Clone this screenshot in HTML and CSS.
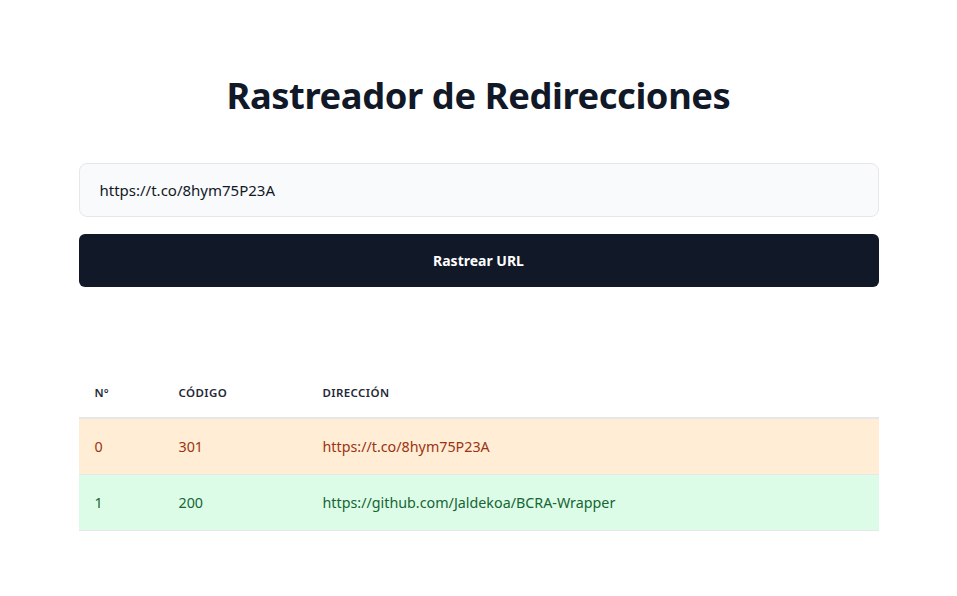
FILE: index.html
```html
<!DOCTYPE html>
<html>
<head>
	<title>Rastreador de Redirecciones</title>
	<link rel="stylesheet" href="styles.css">
</head>
<body>
	<main class="container">
		<h1 class="title">Rastreador de Redirecciones</h1>

		<form class="tracker">
			<input type="text" class="url-input" value="https://t.co/8hym75P23A">
			<button type="button" class="track-button">Rastrear URL</button>
		</form>

		<table class="hops">
			<thead>
				<tr>
					<th class="col-n">Nº</th>
					<th class="col-code">Código</th>
					<th>Dirección</th>
				</tr>
			</thead>
			<tbody>
				<tr class="hop redirect">
					<td>0</td>
					<td>301</td>
					<td>https://t.co/8hym75P23A</td>
				</tr>
				<tr class="hop ok">
					<td>1</td>
					<td>200</td>
					<td>https://github.com/Jaldekoa/BCRA-Wrapper</td>
				</tr>
			</tbody>
		</table>
	</main>
</body>
</html>
```

FILE: styles.css
```css
/* Page layout */

body {
	margin: 0;
	background: #ffffff;
	font-family: "Noto Sans", "Open Sans", sans-serif;
	color: #111827;
}

.container {
	max-width: 800px;
	margin: 0 auto;
	padding-top: 73px;
}

.title {
	margin: 0 0 46px;
	font-size: 36.3px;
	line-height: 44px;
	font-weight: 700;
	text-align: center;
	color: #111827;
	letter-spacing: -0.4px;
}

/* Form */

.tracker {
	display: flex;
	flex-direction: column;
	gap: 17px;
}

.url-input {
	box-sizing: border-box;
	height: 54px;
	padding: 0 20px;
	border: 1px solid #e5e7eb;
	border-radius: 8px;
	background: #f9fafb;
	font-family: inherit;
	font-size: 15px;
	color: #111827;
	outline: none;
}

.track-button {
	height: 53px;
	border: none;
	border-radius: 6px;
	background: #111827;
	color: #ffffff;
	font-family: inherit;
	font-size: 14px;
	font-weight: 700;
	cursor: pointer;
}

/* Results table */

.hops {
	width: 100%;
	margin-top: 82px;
	border-collapse: collapse;
}

.hops th {
	padding: 16px;
	font-size: 11.5px;
	line-height: 16px;
	font-weight: 600;
	text-transform: uppercase;
	letter-spacing: 0.4px;
	text-align: left;
	color: #1f2937;
	border-bottom: 2px solid #e5e7eb;
}

.hops .col-n { width: 52px; }
.hops .col-code { width: 112px; }

.hops td {
	padding: 16px;
	font-size: 14.3px;
	line-height: 23px;
	border-bottom: 1px solid #e5e7eb;
}

.hop.redirect {
	background: #ffedd5;
	color: #9a3412;
}

.hop.ok {
	background: #dcfce7;
	color: #166534;
}
```
